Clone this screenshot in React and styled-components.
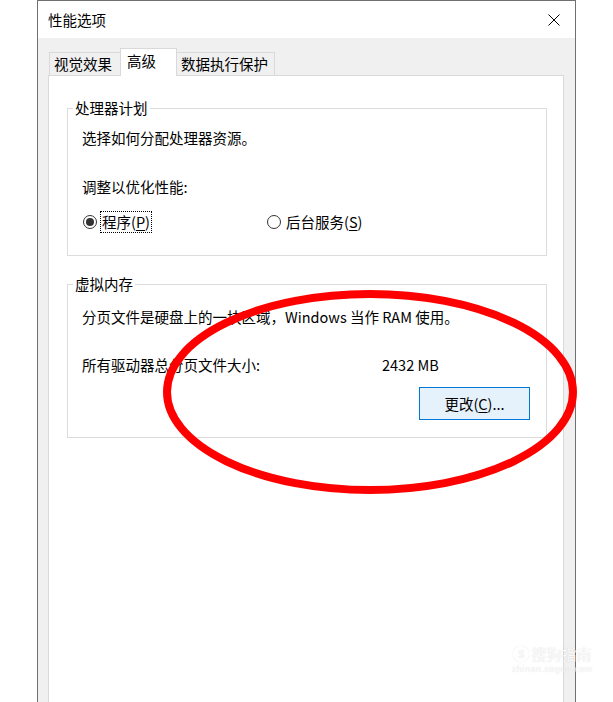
import styled, { createGlobalStyle } from "styled-components";

const GlobalStyle = createGlobalStyle`
  html, body, #root {
    height: 100%;
  }
  body {
    margin: 0;
    background: #ffffff;
    font-family: "Microsoft YaHei", "Noto Sans CJK SC", "Noto Sans", sans-serif;
    font-size: 14.5px;
    line-height: 20px;
    color: #000;
    overflow: hidden;
  }
  * {
    box-sizing: border-box;
  }
`;

const Page = styled.div`
  position: relative;
  height: 100%;
`;

const Window = styled.div`
  margin-left: 37px;
  width: 539px;
  height: 100%;
  border: 1px solid #707070;
  border-bottom: none;
  background: #f0f0f0;
  display: flex;
  flex-direction: column;
`;

const TitleBar = styled.div`
  height: 37px;
  background: #fff;
  display: flex;
  align-items: center;
  justify-content: space-between;
  padding-left: 10px;
  flex-shrink: 0;
`;

const Title = styled.span`
  font-size: 14.5px;
`;

const CloseButton = styled.div`
  width: 42px;
  height: 37px;
  display: flex;
  align-items: center;
  justify-content: center;
`;

const Body = styled.div`
  flex: 1;
  display: flex;
  flex-direction: column;
  padding: 11px 11px 0 10px;
`;

const TabStrip = styled.div`
  display: flex;
  align-items: flex-end;
  height: 27px;
  padding-left: 1px;
  margin-bottom: -1px;
  position: relative;
  z-index: 1;
`;

const Tab = styled.div`
  width: ${(p) => p.$w}px;
  height: ${(p) => (p.$active ? 28 : 24)}px;
  margin-left: ${(p) => (p.$first ? 0 : -1)}px;
  padding-left: ${(p) => p.$pad}px;
  padding-top: ${(p) => (p.$active ? 2 : 1)}px;
  border: 1px solid #d9d9d9;
  border-bottom: ${(p) => (p.$active ? "none" : "1px solid #d9d9d9")};
  background: ${(p) => (p.$active ? "#fff" : "#f0f0f0")};
  position: relative;
  z-index: ${(p) => (p.$active ? 2 : 1)};
  white-space: nowrap;
`;

const Panel = styled.div`
  flex: 1;
  background: #fff;
  border: 1px solid #d9d9d9;
  border-bottom: none;
  padding: 22px 16px 0 18px;
  display: flex;
  flex-direction: column;
  gap: 18px;
`;

const Group = styled.fieldset`
  margin: 0;
  min-width: 0;
  border: 1px solid #dcdcdc;
  padding: 0 16px ${(p) => p.$bottom}px 14px;
  display: flex;
  flex-direction: column;
`;

const Legend = styled.legend`
  padding: 0 2px;
  margin-left: -9px;
  line-height: 20px;
`;

const Line = styled.div`
  margin-top: ${(p) => p.$top}px;
  white-space: nowrap;
`;

const RadioRow = styled.div`
  display: flex;
  align-items: center;
  margin-top: 14px;
  margin-left: 1px;
  height: 22px;
`;

const Option = styled.label`
  width: ${(p) => p.$w || "auto"};
  display: flex;
  align-items: center;
  gap: 5px;
`;

const RadioCircle = styled.span`
  width: 14px;
  height: 14px;
  border: 1px solid #333;
  border-radius: 50%;
  position: relative;
  flex-shrink: 0;
  &::after {
    content: "";
    display: ${(p) => (p.$checked ? "block" : "none")};
    position: absolute;
    left: 2px;
    top: 2px;
    width: 8px;
    height: 8px;
    border-radius: 50%;
    background: #333;
  }
`;

const OptionText = styled.span`
  height: 22px;
  display: flex;
  align-items: center;
  padding: 0 1px;
  border: 1px dotted ${(p) => (p.$focused ? "#000" : "transparent")};
  margin-left: -2px;
`;

const Key = styled.span`
  text-decoration: underline;
  text-underline-offset: 2px;
`;

const SizeRow = styled.div`
  display: flex;
  margin-top: 28px;
  white-space: nowrap;
`;

const SizeLabel = styled.span`
  width: 300px;
`;

const ChangeButton = styled.button`
  align-self: flex-end;
  margin-top: 12px;
  width: 111px;
  height: 33px;
  background: #e5f1fb;
  border: 1px solid #0078d7;
  font: inherit;
  color: #000;
  padding: 0;
`;

const Annotation = styled.svg`
  position: absolute;
  left: 0;
  top: 0;
  pointer-events: none;
`;

const Watermark = styled.div`
  position: absolute;
  left: 512px;
  top: 644px;
  display: flex;
  flex-direction: column;
  align-items: center;
  color: rgba(255, 255, 255, 0.9);
  text-shadow: 0 0 1px rgba(0, 0, 0, 0.18);
  pointer-events: none;
`;

const MarkTop = styled.div`
  display: flex;
  align-items: center;
  gap: 2px;
  font-size: 15px;
  line-height: 20px;
`;

const MarkLogo = styled.span`
  width: 16px;
  height: 16px;
  border-radius: 50%;
  border: 2px solid rgba(255, 255, 255, 0.9);
  box-shadow: 0 0 1px rgba(0, 0, 0, 0.2);
  font-size: 10px;
  line-height: 12px;
  text-align: center;
  font-weight: bold;
`;

const MarkUrl = styled.div`
  font-family: "DejaVu Sans", sans-serif;
  font-size: 8px;
  line-height: 12px;
  letter-spacing: 0.5px;
`;

function App() {
  return (
    <Page>
      <GlobalStyle />
      <Window>
        <TitleBar>
          <Title>性能选项</Title>
          <CloseButton>
            <svg width="12" height="12" viewBox="0 0 12 12">
              <path d="M0.5 0.5 L11.5 11.5 M11.5 0.5 L0.5 11.5" stroke="#000" strokeWidth="1" />
            </svg>
          </CloseButton>
        </TitleBar>
        <Body>
          <TabStrip>
            <Tab $first $w={72} $pad={4}>视觉效果</Tab>
            <Tab $active $w={57} $pad={6}>高级</Tab>
            <Tab $w={99} $pad={4}>数据执行保护</Tab>
          </TabStrip>
          <Panel>
            <Group $bottom={22}>
              <Legend>处理器计划</Legend>
              <Line $top={10}>选择如何分配处理器资源。</Line>
              <Line $top={29}>调整以优化性能:</Line>
              <RadioRow>
                <Option $w="184px">
                  <RadioCircle $checked />
                  <OptionText $focused>
                    程序(<Key>P</Key>)
                  </OptionText>
                </Option>
                <Option>
                  <RadioCircle />
                  <OptionText>
                    后台服务(<Key>S</Key>)
                  </OptionText>
                </Option>
              </RadioRow>
            </Group>
            <Group $bottom={17}>
              <Legend>虚拟内存</Legend>
              <Line $top={13}>分页文件是硬盘上的一块区域，Windows 当作 RAM 使用。</Line>
              <SizeRow>
                <SizeLabel>所有驱动器总分页文件大小:</SizeLabel>
                <span>2432 MB</span>
              </SizeRow>
              <ChangeButton>
                更改(<Key>C</Key>)...
              </ChangeButton>
            </Group>
          </Panel>
        </Body>
      </Window>
      <Annotation width="613" height="702" viewBox="0 0 613 702">
        <ellipse cx="370" cy="392" rx="203" ry="98" fill="none" stroke="#ff0000" strokeWidth="8" />
      </Annotation>
      <Watermark>
        <MarkTop>
          <MarkLogo>S</MarkLogo>
          <span>搜狗指南</span>
        </MarkTop>
        <MarkUrl>zhinan.sogou.com</MarkUrl>
      </Watermark>
    </Page>
  );
}

export default App;
